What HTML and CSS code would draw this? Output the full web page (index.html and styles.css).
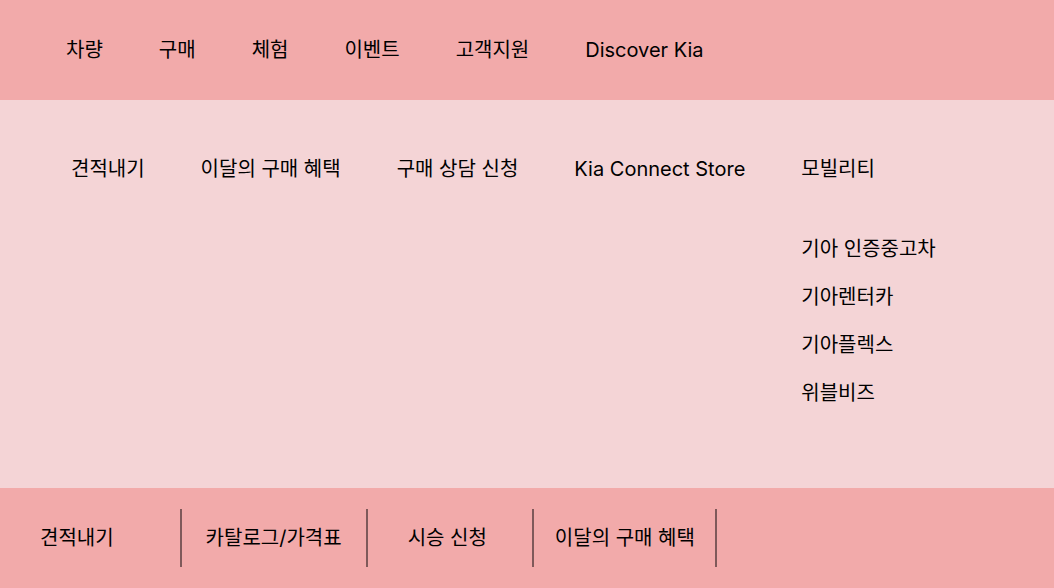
FILE: index.html
```html
<!DOCTYPE html>
<html lang="ko">
<head>
<meta charset="utf-8">
<title>Kia</title>
<link rel="stylesheet" href="styles.css">
</head>
<body>
<header class="main-nav">
  <nav class="nav-row">
    <a href="#">차량</a>
    <a href="#">구매</a>
    <a href="#">체험</a>
    <a href="#">이벤트</a>
    <a href="#">고객지원</a>
    <a href="#">Discover Kia</a>
  </nav>
</header>
<main class="mega-menu">
  <a href="#">견적내기</a>
  <a href="#">이달의 구매 혜택</a>
  <a href="#">구매 상담 신청</a>
  <a href="#">Kia Connect Store</a>
  <section class="mobility">
    <a href="#">모빌리티</a>
    <ul class="sub-list">
      <li><a href="#">기아 인증중고차</a></li>
      <li><a href="#">기아렌터카</a></li>
      <li><a href="#">기아플렉스</a></li>
      <li><a href="#">위블비즈</a></li>
    </ul>
  </section>
</main>
<footer class="quick-bar">
  <a class="quick-first" href="#">견적내기</a>
  <a href="#">카탈로그/가격표</a>
  <a class="quick-drive" href="#">시승 신청</a>
  <a class="quick-last" href="#">이달의 구매 혜택</a>
</footer>
</body>
</html>
```
FILE: styles.css
```css
* { box-sizing: border-box; }

body {
  margin: 0;
  min-height: 100vh;
  display: flex;
  flex-direction: column;
  background: #f4d4d6;
  color: #000;
  font: 20px/24px Inter, "Noto Sans CJK KR", sans-serif;
}

a {
  color: inherit;
  text-decoration: none;
  white-space: nowrap;
}

.main-nav {
  padding: 38px 66px;
  background: #f2aaaa;
}

.nav-row {
  display: flex;
  gap: 56px;
}

.mega-menu {
  flex: 1;
  display: flex;
  align-items: flex-start;
  gap: 56px;
  padding: 57px 71px 83px;
}

.mobility {
  display: flex;
  flex-direction: column;
  gap: 56px;
}

.sub-list {
  display: flex;
  flex-direction: column;
  gap: 24px;
  margin: 0;
  padding: 0;
  list-style: none;
}

.sub-list a { display: block; }

.quick-bar {
  display: flex;
  padding: 21px 16px;
  background: #f2aaaa;
}

.quick-bar a {
  padding: 17px 24px;
  border-right: 2px solid #7f595a;
}

.quick-bar .quick-first { padding-right: 66px; }

.quick-bar .quick-drive { padding: 17px 45px 17px 40px; }

.quick-bar .quick-last { padding: 17px 20px 17px 21px; }
```
